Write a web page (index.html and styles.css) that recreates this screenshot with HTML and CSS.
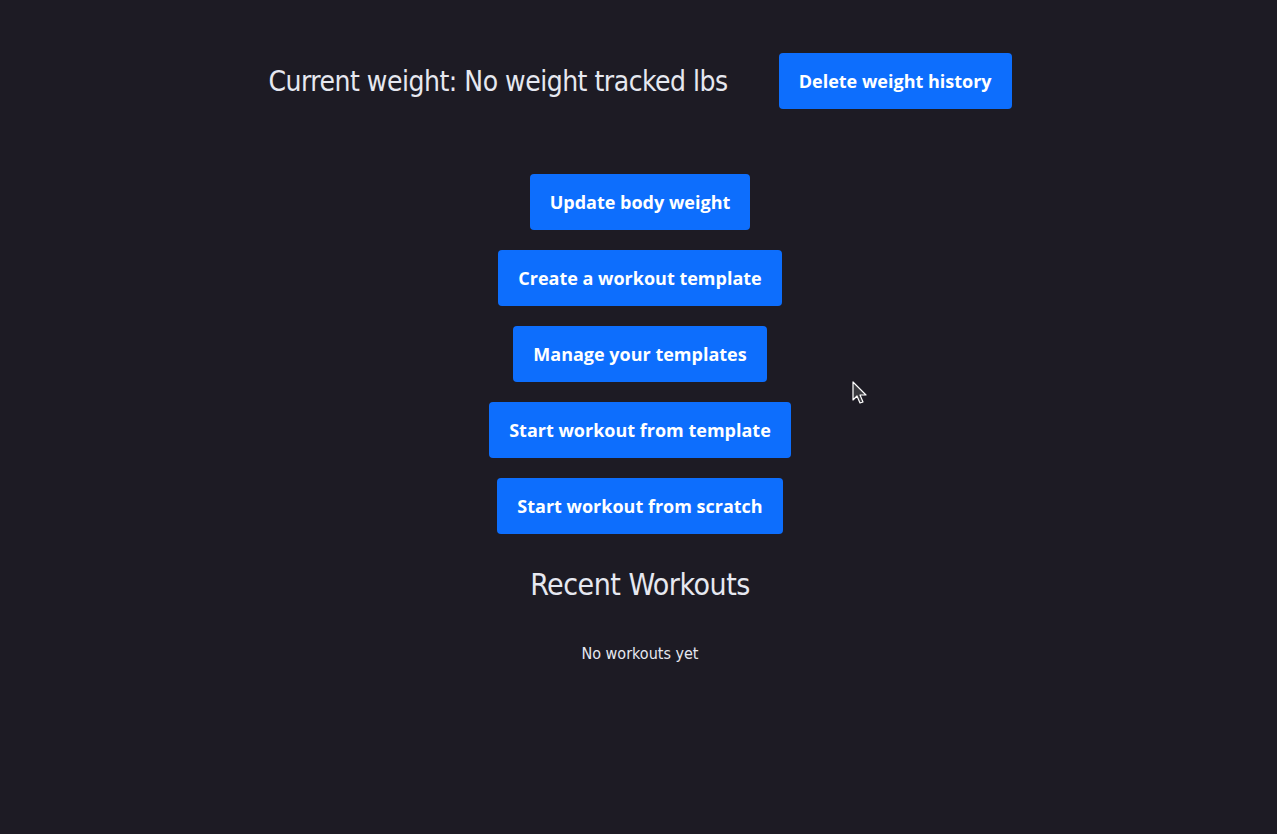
FILE: index.html
```html
<!DOCTYPE html>
<html>
<head>
<meta charset="utf-8">
<link rel="stylesheet" href="styles.css">
</head>
<body>
<main class="page">
  <header class="weight-row">
    <h2 class="weight-title">Current weight: No weight tracked lbs</h2>
    <button class="btn">Delete weight history</button>
  </header>
  <nav class="actions">
    <button class="btn">Update body weight</button>
    <button class="btn">Create a workout template</button>
    <button class="btn">Manage your templates</button>
    <button class="btn">Start workout from template</button>
    <button class="btn">Start workout from scratch</button>
  </nav>
  <section class="recent">
    <h2 class="recent-title">Recent Workouts</h2>
    <p class="empty">No workouts yet</p>
  </section>
</main>
<svg class="cursor" width="16" height="24" viewBox="0 0 16 24"><path d="M1 1 L1 19 L5 15 L8 22 L11 21 L8 14 L14 14 Z" fill="#3a3a3f" stroke="#ffffff" stroke-width="1.2" stroke-linejoin="round"/></svg>
</body>
</html>
```
FILE: styles.css
```css
html, body {
  margin: 0;
  padding: 0;
  background: #1d1b24;
  min-height: 100%;
}
body {
  position: relative;
  height: 834px;
  color: #e8e8ee;
  font-family: "DejaVu Sans Condensed", "DejaVu Sans", sans-serif;
}
.page {
  display: flex;
  flex-direction: column;
  align-items: center;
  padding-top: 53px;
  padding-left: 3px;
}
.weight-row {
  display: flex;
  align-items: center;
  gap: 51px;
}
.weight-title {
  margin: 0;
  font-weight: 300;
  font-size: 28px;
  letter-spacing: -0.5px;
  color: #e6e8f0;
}
.btn {
  background: #0d6efd;
  color: #ffffff;
  border: none;
  border-radius: 4px;
  font-family: "Open Sans", "Noto Sans", sans-serif;
  font-weight: 700;
  font-size: 18px;
  line-height: 24px;
  padding: 16px 20px;
  cursor: pointer;
}
.actions {
  display: flex;
  flex-direction: column;
  align-items: center;
  gap: 20px;
  margin-top: 65px;
}
.recent {
  display: flex;
  flex-direction: column;
  align-items: center;
}
.recent-title {
  margin: 33px 0 0;
  font-weight: 300;
  font-size: 30px;
  letter-spacing: -0.5px;
  color: #e6e8f0;
}
.empty {
  margin: 42px 0 0;
  font-size: 16px;
  color: #e6e8f0;
}
.cursor {
  position: absolute;
  left: 852px;
  top: 381px;
}
```
